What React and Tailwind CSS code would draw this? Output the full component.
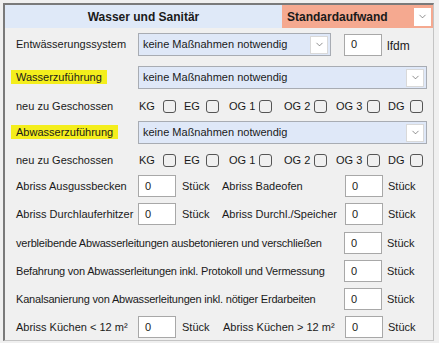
import { ChevronDown } from "lucide-react";

// label width, item width (columns are fixed in the form)
const floors = [
    ["KG", 24, 45],
    ["EG", 22, 45],
    ["OG 1", 30, 55],
    ["OG 2", 30, 52],
    ["OG 3", 31, 52],
    ["DG", 22, 40],
];

function DropButton() {
    return (
        <span className="flex h-[18px] w-[18px] items-center justify-center border border-[#d9d9d9] bg-white">
            <ChevronDown size={11} strokeWidth={1.3} color="#444" />
        </span>
    );
}

function Select({ width }) {
    return (
        <div
            className={`flex h-[23px] ${width} items-center justify-between border border-[#a8acb3] bg-[#dfe8f8] pl-[4px] pr-[2px]`}
        >
            <span>keine Maßnahmen notwendig</span>
            <DropButton />
        </div>
    );
}

function NumInput() {
    return (
        <div className="flex h-[22px] w-[38px] items-center border border-[#a8a8a8] bg-white pl-[6px]">
            0
        </div>
    );
}

function Label({ children, mark }) {
    return (
        <div className="w-[122px] shrink-0 whitespace-nowrap">
            {mark ? (
                <span className="-ml-[5px] bg-[#f4ee1c] px-[5px] py-[1px]">
                    {children}
                </span>
            ) : (
                children
            )}
        </div>
    );
}

function Floors() {
    return (
        <div className="flex h-[28px] items-center">
            <Label>neu zu Geschossen</Label>
            <div className="flex items-center pl-[1px]">
                {floors.map(([f, lw, w]) => (
                    <div
                        key={f}
                        className="flex shrink-0 items-center whitespace-nowrap"
                        style={{ width: w }}
                    >
                        <span className="shrink-0" style={{ width: lw }}>
                            {f}
                        </span>
                        <span className="h-[13px] w-[13px] rounded-[3px] border border-[#555]" />
                    </div>
                ))}
            </div>
        </div>
    );
}

function App() {
    return (
        <div
            className="h-[343px] w-[439px] bg-[#f0f0f0] pl-[3px] pt-[3px] text-[11px] text-[#1a1a1a]"
            style={{ fontFamily: '"Liberation Sans", Arial, sans-serif' }}
        >
            <div className="h-[338px] w-[431px] border-t-2 border-l-2 border-r border-b border-t-[#7a7a7a] border-l-[#7a7a7a] border-r-[#c4c4c4] border-b-[#c4c4c4]">
                {/* Header */}
                <div className="flex h-[23px] items-center bg-[#dfe9f8]">
                    <div className="w-[277px] text-center text-[12px] font-bold">
                        Wasser und Sanitär
                    </div>
                    <div className="flex h-[23px] w-[151px] items-center justify-between bg-[#f5a990] pl-[5px] pr-[2px]">
                        <span className="text-[12px] font-bold">Standardaufwand</span>
                        <span className="flex h-[18px] w-[17px] items-center justify-center bg-white">
                            <ChevronDown size={11} strokeWidth={1.3} color="#444" />
                        </span>
                    </div>
                </div>

                <div className="pl-[11px] pr-[5px] pt-[5px]">
                    <div className="flex h-[23px] items-center">
                        <Label>Entwässerungssystem</Label>
                        <Select width="w-[193px]" />
                        <div className="ml-[13px]">
                            <NumInput />
                        </div>
                        <span className="ml-[5px] mt-[2px] text-[12px]">lfdm</span>
                    </div>

                    <div className="mt-[10px] flex h-[23px] items-center">
                        <Label mark>Wasserzuführung</Label>
                        <Select width="w-[289px]" />
                    </div>

                    <div className="mt-[3px]">
                        <Floors />
                    </div>

                    <div className="mt-[1px] flex h-[23px] items-center">
                        <Label mark>Abwasserzuführung</Label>
                        <Select width="w-[289px]" />
                    </div>

                    <div className="mt-[2px]">
                        <Floors />
                    </div>

                    <div className="mt-[1px] flex h-[22px] items-center">
                        <Label>Abriss Ausgussbecken</Label>
                        <NumInput />
                        <span className="ml-[6px] w-[40px]">Stück</span>
                        <span className="w-[123px]">Abriss Badeofen</span>
                        <NumInput />
                        <span className="ml-[5px]">Stück</span>
                    </div>

                    <div className="mt-[6px] flex h-[22px] items-center">
                        <Label>Abriss Durchlauferhitzer</Label>
                        <NumInput />
                        <span className="ml-[6px] w-[40px]">Stück</span>
                        <span className="w-[123px]">Abriss Durchl./Speicher</span>
                        <NumInput />
                        <span className="ml-[5px]">Stück</span>
                    </div>

                    {[
                        "verbleibende Abwasserleitungen ausbetonieren und verschließen",
                        "Befahrung von Abwasserleitungen inkl. Protokoll und Vermessung",
                        "Kanalsanierung von Abwasserleitungen inkl. nötiger Erdarbeiten",
                    ].map((t, i) => (
                        <div
                            key={t}
                            className={`${i === 0 ? "mt-[7px]" : "mt-[6px]"} flex h-[22px] items-center`}
                        >
                            <span className="w-[328px] tracking-[-0.2px]">{t}</span>
                            <NumInput />
                            <span className="ml-[5px]">Stück</span>
                        </div>
                    ))}

                    <div className="mt-[6px] flex h-[22px] items-center">
                        <Label>Abriss Küchen &lt; 12 m²</Label>
                        <NumInput />
                        <span className="ml-[6px] w-[41px]">Stück</span>
                        <span className="w-[122px]">Abriss Küchen &gt; 12 m²</span>
                        <NumInput />
                        <span className="ml-[5px]">Stück</span>
                    </div>
                </div>
            </div>
        </div>
    );
}

export default App;
